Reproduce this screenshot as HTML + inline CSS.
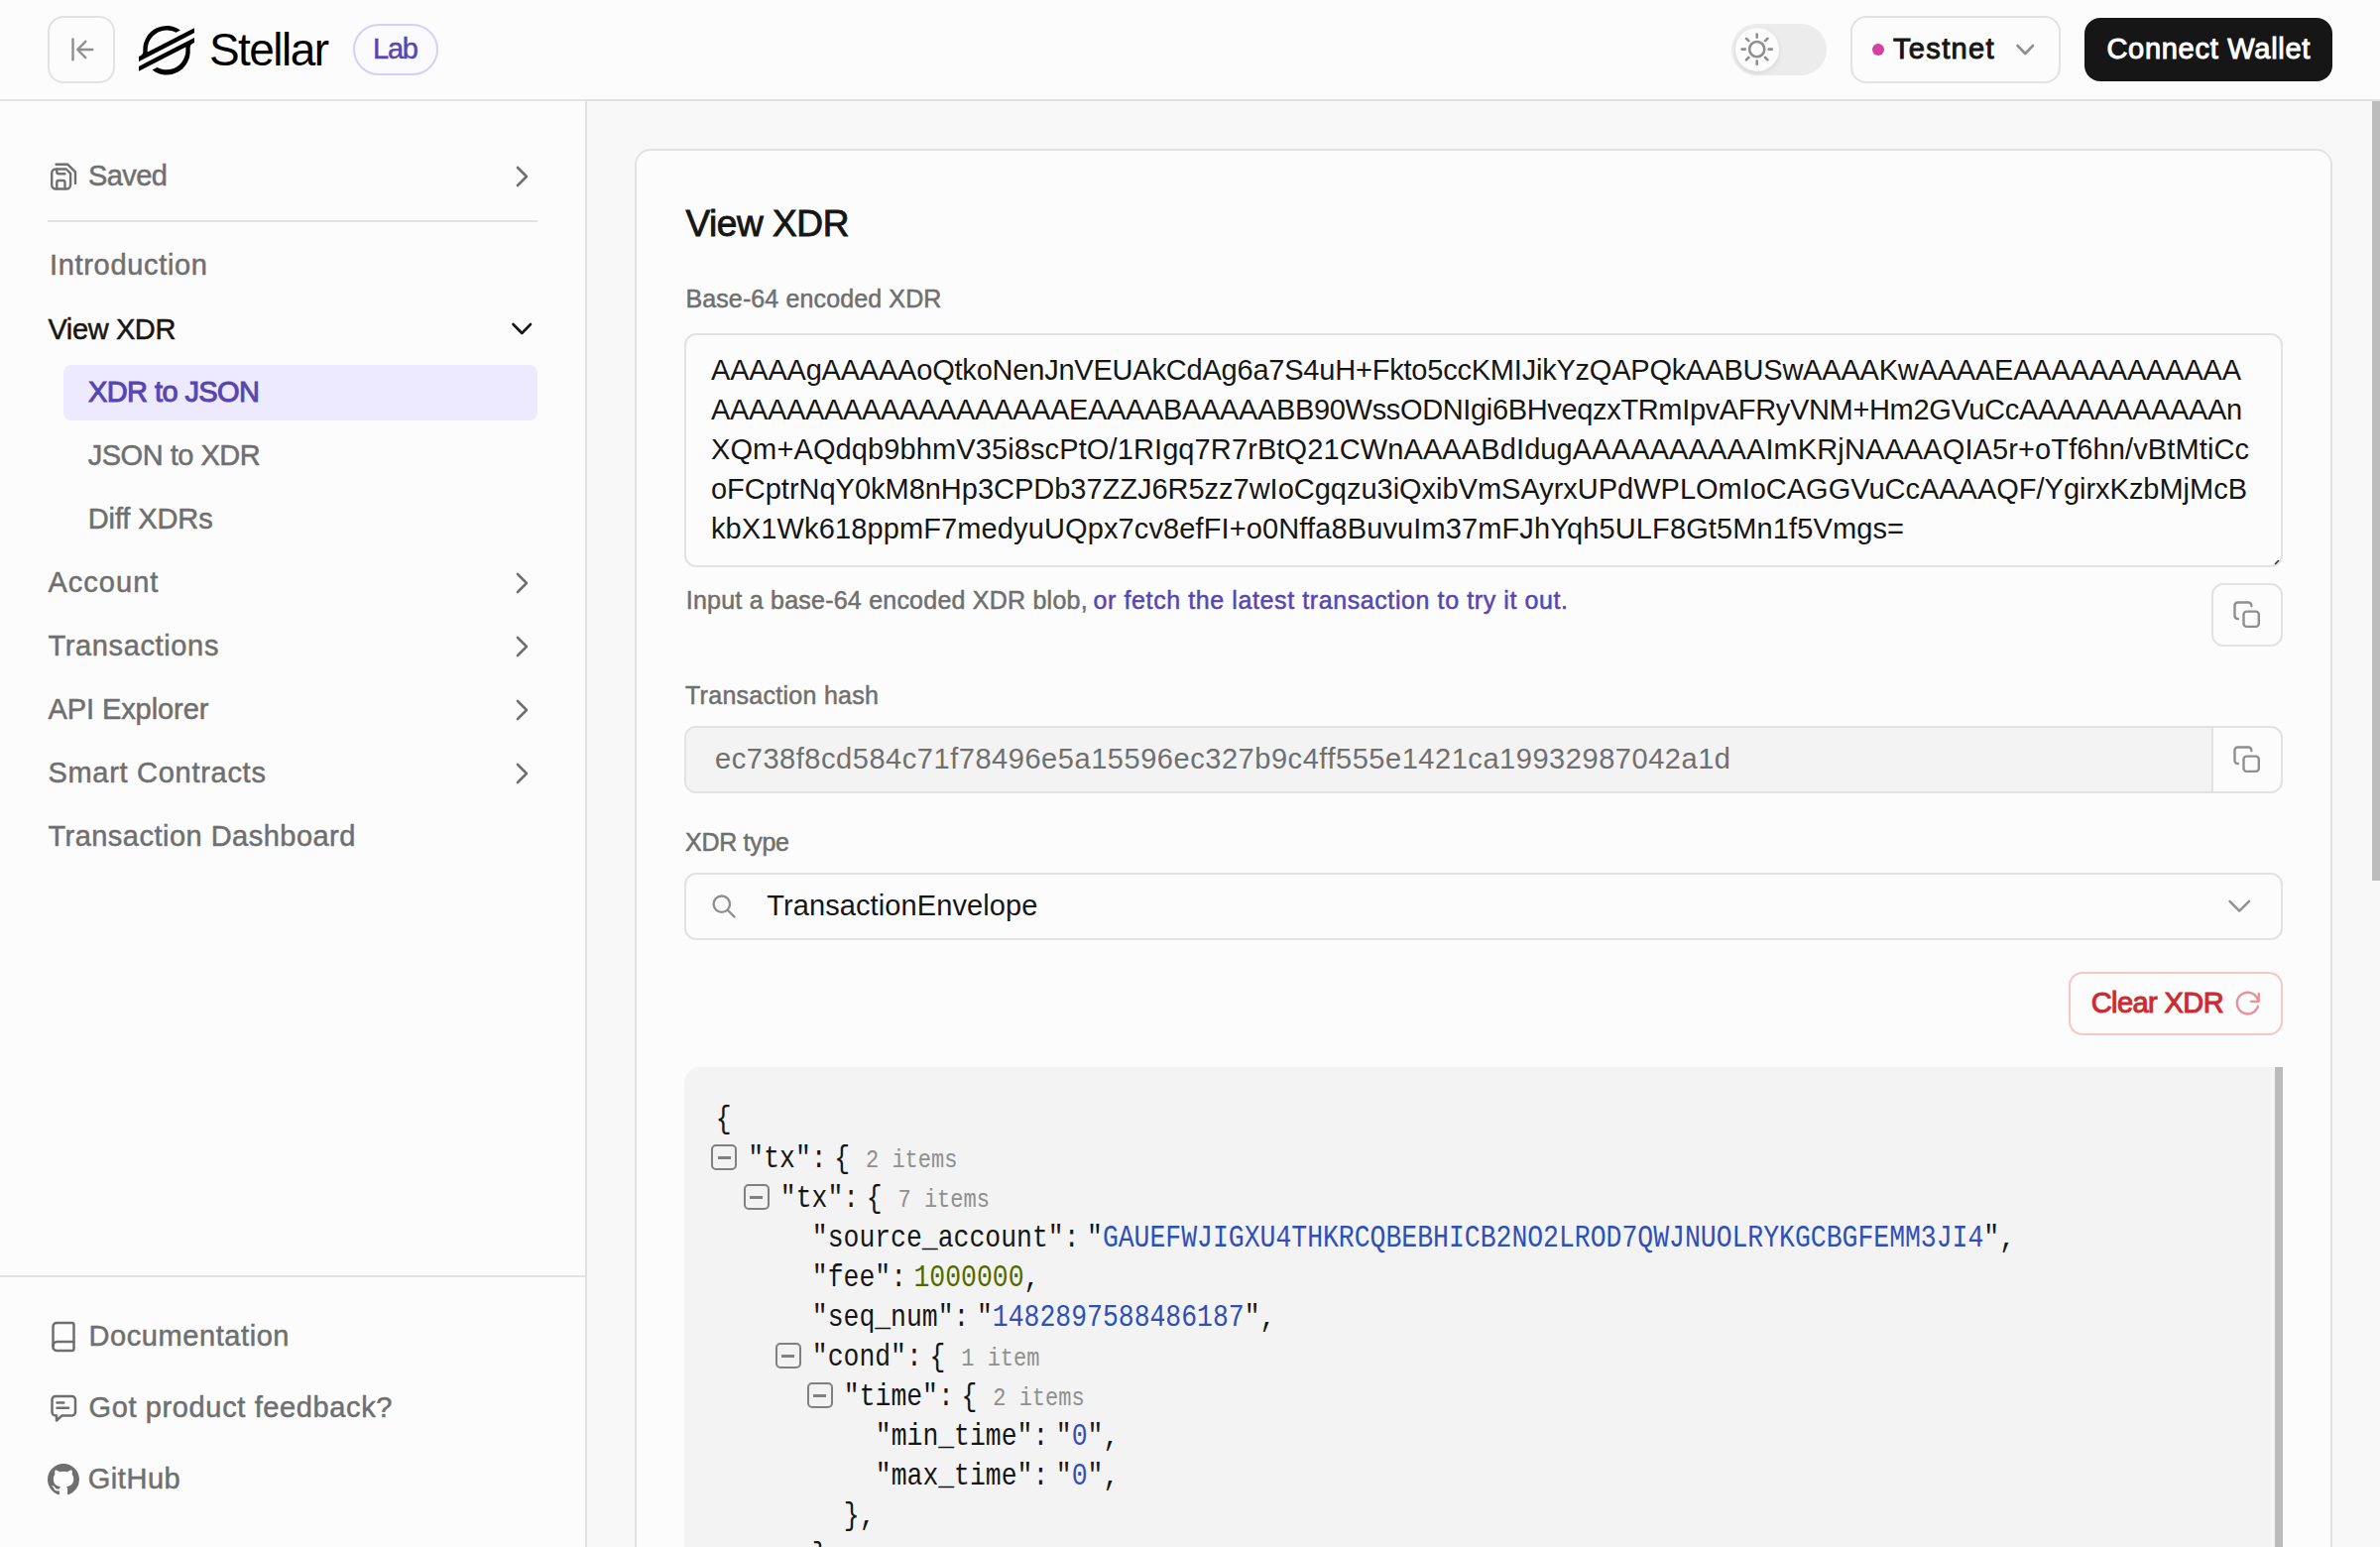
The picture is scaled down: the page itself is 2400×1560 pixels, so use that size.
<!DOCTYPE html>
<html><head><meta charset="utf-8">
<style>
html,body{margin:0;padding:0;width:2400px;height:1560px;overflow:hidden;background:#f8f8f8;font-family:"Liberation Sans",sans-serif;}
.a{position:absolute;}
.t{position:absolute;white-space:nowrap;line-height:1;}
.b{font-weight:bold;}
.m{font-family:"Liberation Mono",monospace;}
svg{position:absolute;overflow:visible;}
@media (max-width:1300px){html{zoom:0.5;}}
</style></head><body>

<!-- HEADER -->
<div class="a" style="left:0;top:0;width:2400px;height:100px;background:#fcfcfc;border-bottom:2px solid #e2e2e2;"></div>
<div class="a" style="left:48px;top:16px;width:64px;height:64px;border:2px solid #e2e2e2;border-radius:16px;"></div>
<svg style="left:0;top:0" width="2400" height="100">
  <g stroke="#8f8f8f" stroke-width="2.4" fill="none" stroke-linecap="round" stroke-linejoin="round">
    <path d="M73.5 39.5V60.2"/><path d="M93.3 50H79M86.3 41.8L78.2 50L86.3 58.2"/>
  </g>
</svg>
<svg style="left:140px;top:26px" width="56" height="48" viewBox="0 0 236.36 200" preserveAspectRatio="none"><path fill="#000" d="M203,26.16l-28.46,14.5-137.43,70a82.49,82.49,0,0,1-.7-10.69A82.88,82.88,0,0,1,158.2,28.6l16.29-8.3,2.43-1.24A100,100,0,0,0,18.18,100q0,3.82.29,7.61a18.19,18.19,0,0,1-9.88,17.58L0,129.57V150l25.29-12.89,0,0,8.19-4.18,8.07-4.11v0L186.43,55l16.28-8.29,33.65-17.15V9.14Z"/><path fill="#000" d="M236.36,50,49.78,145,33.5,153.31,0,170.38v20.41l33.27-16.95,28.46-14.5L199.3,89.24A83.45,83.45,0,0,1,200,100,82.87,82.87,0,0,1,78.09,174.91l-1,.53-19.84,10.11A100,100,0,0,0,218.18,100c0-2.57-.1-5.14-.29-7.68a18.21,18.21,0,0,1,9.87-17.58l8.6-4.38Z"/></svg>
<div class="a" style="left:356px;top:24px;width:82px;height:48px;border:2px solid #d7cff9;border-radius:26px;background:#fbfaff;"></div>

<div class="a" style="left:1746px;top:24px;width:96px;height:52px;border-radius:26px;background:#ececec;"></div>
<div class="a" style="left:1750px;top:28px;width:44px;height:44px;border-radius:50%;background:#fcfcfc;box-shadow:0 2px 5px rgba(0,0,0,0.10);"></div>
<svg style="left:0;top:0" width="2400" height="100">
  <g stroke="#8f8f8f" stroke-width="2.6" fill="none" stroke-linecap="round">
    <circle cx="1771.7" cy="49.6" r="7.6"/>
    <path d="M1771.7 34.5v3.2M1771.7 61.5v3.2M1756.6 49.6h3.2M1783.6 49.6h3.2M1761 38.9l2.3 2.3M1780.1 58l2.3 2.3M1761 60.3l2.3-2.3M1780.1 41.2l2.3-2.3"/>
  </g>
</svg>

<div class="a" style="left:1866px;top:16px;width:208px;height:64px;border:2px solid #e2e2e2;border-radius:16px;"></div>
<div class="a" style="left:1888px;top:44px;width:12px;height:12px;border-radius:50%;background:#d6409f;"></div>
<svg style="left:0;top:0" width="2400" height="100"><path d="M2034.5 46L2042.3 54L2050 46" stroke="#8f8f8f" stroke-width="2.6" fill="none" stroke-linecap="round" stroke-linejoin="round"/></svg>

<div class="a" style="left:2102px;top:18px;width:250px;height:64px;border-radius:16px;background:#161616;"></div>

<!-- SIDEBAR -->
<div class="a" style="left:0;top:102px;width:590px;height:1458px;background:#fcfcfc;border-right:2px solid #e2e2e2;"></div>
<div id="sidebar"><div class="a" style="left:64px;top:368px;width:478px;height:56px;border-radius:8px;background:#ede9fe;"></div><div class="a" style="left:48px;top:222px;width:494px;height:2px;background:#e2e2e2;"></div><div class="a" style="left:0;top:1286px;width:590px;height:2px;background:#e2e2e2;"></div><svg style="left:0;top:0" width="600" height="1560"><path d="M522 169 L531 178 L522 187" stroke="#6f6f6f" stroke-width="2.6" fill="none" stroke-linecap="round" stroke-linejoin="round"/><path d="M522 579 L531 588 L522 597" stroke="#6f6f6f" stroke-width="2.6" fill="none" stroke-linecap="round" stroke-linejoin="round"/><path d="M522 643 L531 652 L522 661" stroke="#6f6f6f" stroke-width="2.6" fill="none" stroke-linecap="round" stroke-linejoin="round"/><path d="M522 707 L531 716 L522 725" stroke="#6f6f6f" stroke-width="2.6" fill="none" stroke-linecap="round" stroke-linejoin="round"/><path d="M522 771 L531 780 L522 789" stroke="#6f6f6f" stroke-width="2.6" fill="none" stroke-linecap="round" stroke-linejoin="round"/><path d="M517.5 327 L526.3 336 L535 327" stroke="#161616" stroke-width="2.6" fill="none" stroke-linecap="round" stroke-linejoin="round"/><g stroke="#6f6f6f" stroke-width="2.4" fill="none" stroke-linecap="round" stroke-linejoin="round">
<path d="M56.2 170.5H66.7L71.1 174.9V186.5a4 4 0 0 1-4 4H56.2a4 4 0 0 1-4-4V174.5a4 4 0 0 1 4-4z"/>
<path d="M57.3 190.3V184a2 2 0 0 1 2-2h4.2a2 2 0 0 1 2 2v6.3"/>
<path d="M57.3 170.6v2.7a2 2 0 0 0 2 2h6.2"/>
<path d="M56.6 165.8H68.3L76 173.3V184.9"/>
</g><g stroke="#6f6f6f" stroke-width="2.5" fill="none" stroke-linecap="round" stroke-linejoin="round">
<path d="M53.5 1357.5V1337.5a3.5 3.5 0 0 1 3.5-3.5h15.5a2 2 0 0 1 2 2v24a2 2 0 0 1-2 2H57a3.5 3.5 0 0 1-3.5-3.5z"/>
<path d="M53.5 1357.5a4 4 0 0 1 4-4.5h17"/>
</g><g stroke="#6f6f6f" stroke-width="2.5" fill="none" stroke-linecap="round" stroke-linejoin="round">
<path d="M56 1408h16.5a3.5 3.5 0 0 1 3.5 3.5v12.5a3.5 3.5 0 0 1-3.5 3.5H62.5l-5.5 5v-5h-1a3.5 3.5 0 0 1-3.5-3.5v-12.5A3.5 3.5 0 0 1 56 1408z"/>
<path d="M57.5 1414.5h6.8M57.5 1419.8h11.5"/>
</g></svg><svg style="left:48px;top:1476px" width="32" height="32" viewBox="0 0 16 16"><path fill="#6f6f6f" d="M8 0C3.58 0 0 3.58 0 8c0 3.540 2.290 6.530 5.470 7.590.4.070.55-.17.55-.38 0-.19-.01-.82-.01-1.49-2.010.37-2.530-.49-2.690-.94-.09-.23-.48-.94-.82-1.130-.28-.15-.68-.52-.01-.53.63-.01 1.080.58 1.230.82.72 1.210 1.870.87 2.330.66.07-.52.28-.87.51-1.070-1.780-.2-3.640-.89-3.640-3.950 0-.87.31-1.590.82-2.150-.08-.2-.36-1.020.08-2.120 0 0 .67-.21 2.200.82.64-.18 1.320-.27 2-.27.68 0 1.360.09 2 .27 1.530-1.040 2.200-.82 2.200-.82.44 1.100.16 1.920.08 2.120.51.56.82 1.270.82 2.150 0 3.070-1.870 3.750-3.650 3.950.29.25.54.73.54 1.480 0 1.070-.01 1.930-.01 2.200 0 .21.15.46.55.38A8.013 8.013 0 0016 8c0-4.420-3.580-8-8-8z"/></svg></div><!--/sb-->

<!-- MAIN -->
<div class="a" style="left:2392px;top:102px;width:8px;height:786px;background:#bcbcbc;"></div>
<div class="a" style="left:640px;top:150px;width:1708px;height:1500px;background:#fcfcfc;border:2px solid #e2e2e2;border-radius:16px;"></div>
<div id="main"><div class="a" style="left:690px;top:336px;width:1608px;height:232px;border:2px solid #e2e2e2;border-radius:12px;background:#fcfcfc;"></div><svg style="left:0;top:0" width="2400" height="1560"><path d="M2294.5 568.5L2297.5 565.5" stroke="#333" stroke-width="1.6" stroke-linecap="round"/></svg><div class="a" style="left:2230px;top:588px;width:68px;height:60px;border:2px solid #e2e2e2;border-radius:12px;background:#fcfcfc;"></div><div class="a" style="left:690px;top:732px;width:1608px;height:64px;border:2px solid #e2e2e2;border-radius:12px;background:#fcfcfc;overflow:hidden;"><div class="a" style="left:0;top:0;width:1538px;height:64px;background:#f3f3f3;border-right:2px solid #e2e2e2;"></div></div><svg style="left:0;top:0" width="2400" height="1560"><g stroke="#8f8f8f" stroke-width="2.4" fill="none" stroke-linecap="round" stroke-linejoin="round"><path d="M2256.8 624h-0.3a3 3 0 0 1-3-3V610.5a3 3 0 0 1 3-3h10.8a3 3 0 0 1 3 3v0.6"/><rect x="2262.5" y="616.6" width="15.3" height="15.3" rx="3"/></g><g stroke="#8f8f8f" stroke-width="2.4" fill="none" stroke-linecap="round" stroke-linejoin="round"><path d="M2256.8 770h-0.3a3 3 0 0 1-3-3V756.5a3 3 0 0 1 3-3h10.8a3 3 0 0 1 3 3v0.6"/><rect x="2262.5" y="762.6" width="15.3" height="15.3" rx="3"/></g></svg><div class="a" style="left:690px;top:880px;width:1608px;height:64px;border:2px solid #e2e2e2;border-radius:12px;background:#fcfcfc;"></div><svg style="left:0;top:0" width="2400" height="1560"><g stroke="#8f8f8f" stroke-width="2.4" fill="none" stroke-linecap="round" stroke-linejoin="round"><circle cx="727.8" cy="911.7" r="8.2"/><path d="M734 918L740.5 924.5"/><path d="M2248.5 908.8L2258.2 918.6L2268 908.8"/></g></svg><div class="a" style="left:2086px;top:980px;width:212px;height:60px;border:2px solid #f9c6c6;border-radius:14px;background:#fcfcfc;"></div><svg style="left:0;top:0" width="2400" height="1560"><g stroke="#ec8e93" stroke-width="2.3" fill="none" stroke-linecap="round" stroke-linejoin="round"><path d="M2276.6 1007.6A10.8 10.8 0 1 0 2276.9 1014.8"/><path d="M2277.8 1001.8V1009.8H2269.9"/></g></svg><div class="a" style="left:690px;top:1076px;width:1604px;height:520px;background:#f3f3f3;border-radius:16px 4px 0 0;"></div><div class="a" style="left:2294px;top:1076px;width:8px;height:484px;background:#bbbbbb;"></div><div class="t m" style="left:721.8px;top:1116.7px;font-size:26.45px;color:#161616;transform:scaleY(1.18);transform-origin:0 20.26px;">{</div><div class="a" style="left:717.0px;top:1154.2px;width:22px;height:22px;border:2px solid #808080;border-radius:5px;"><div class="a" style="left:4.5px;top:10px;width:13px;height:2.5px;background:#808080;"></div></div><div class="t m" style="left:754.3px;top:1156.7px;font-size:26.45px;color:#161616;transform:scaleY(1.18);transform-origin:0 20.26px;">"tx"<span>:</span><span style="margin-left:7.5px"></span>{<span style="margin-left:16px;color:#8f8f8f;font-size:22px;">2 items</span></div><div class="a" style="left:749.5px;top:1194.2px;width:22px;height:22px;border:2px solid #808080;border-radius:5px;"><div class="a" style="left:4.5px;top:10px;width:13px;height:2.5px;background:#808080;"></div></div><div class="t m" style="left:786.8px;top:1196.7px;font-size:26.45px;color:#161616;transform:scaleY(1.18);transform-origin:0 20.26px;">"tx"<span>:</span><span style="margin-left:7.5px"></span>{<span style="margin-left:16px;color:#8f8f8f;font-size:22px;">7 items</span></div><div class="t m" style="left:818.8px;top:1236.7px;font-size:26.45px;color:#161616;transform:scaleY(1.18);transform-origin:0 20.26px;">"source_account"<span>:</span><span style="margin-left:7.5px"></span>"<span style="color:#2f4fb8">GAUEFWJIGXU4THKRCQBEBHICB2NO2LROD7QWJNUOLRYKGCBGFEMM3JI4</span>",</div><div class="t m" style="left:818.8px;top:1276.7px;font-size:26.45px;color:#161616;transform:scaleY(1.18);transform-origin:0 20.26px;">"fee"<span>:</span><span style="margin-left:7.5px"></span><span style="color:#4e6b00">1000000</span>,</div><div class="t m" style="left:818.8px;top:1316.7px;font-size:26.45px;color:#161616;transform:scaleY(1.18);transform-origin:0 20.26px;">"seq_num"<span>:</span><span style="margin-left:7.5px"></span>"<span style="color:#2f4fb8">1482897588486187</span>",</div><div class="a" style="left:781.5px;top:1354.2px;width:22px;height:22px;border:2px solid #808080;border-radius:5px;"><div class="a" style="left:4.5px;top:10px;width:13px;height:2.5px;background:#808080;"></div></div><div class="t m" style="left:818.8px;top:1356.7px;font-size:26.45px;color:#161616;transform:scaleY(1.18);transform-origin:0 20.26px;">"cond"<span>:</span><span style="margin-left:7.5px"></span>{<span style="margin-left:16px;color:#8f8f8f;font-size:22px;">1 item</span></div><div class="a" style="left:813.5px;top:1394.2px;width:22px;height:22px;border:2px solid #808080;border-radius:5px;"><div class="a" style="left:4.5px;top:10px;width:13px;height:2.5px;background:#808080;"></div></div><div class="t m" style="left:850.8px;top:1396.7px;font-size:26.45px;color:#161616;transform:scaleY(1.18);transform-origin:0 20.26px;">"time"<span>:</span><span style="margin-left:7.5px"></span>{<span style="margin-left:16px;color:#8f8f8f;font-size:22px;">2 items</span></div><div class="t m" style="left:882.8px;top:1436.7px;font-size:26.45px;color:#161616;transform:scaleY(1.18);transform-origin:0 20.26px;">"min_time"<span>:</span><span style="margin-left:7.5px"></span>"<span style="color:#2f4fb8">0</span>",</div><div class="t m" style="left:882.8px;top:1476.7px;font-size:26.45px;color:#161616;transform:scaleY(1.18);transform-origin:0 20.26px;">"max_time"<span>:</span><span style="margin-left:7.5px"></span>"<span style="color:#2f4fb8">0</span>",</div><div class="t m" style="left:850.8px;top:1516.7px;font-size:26.45px;color:#161616;transform:scaleY(1.18);transform-origin:0 20.26px;">},</div><div class="t m" style="left:818.8px;top:1556.7px;font-size:26.45px;color:#161616;transform:scaleY(1.18);transform-origin:0 20.26px;">},</div></div><!--/mn-->

<!--TEXT-->
<div class="t" id="stellar" style="left:211.0px;top:27.2px;font-size:46px;color:#000;letter-spacing:-1.565px;">Stellar</div>
<div class="t" id="lab" style="left:376.0px;top:35.4px;font-size:29px;color:#5746af;-webkit-text-stroke:0.5px #5746af;letter-spacing:-1.195px;">Lab</div>
<div class="t" id="testnet" style="left:1909.0px;top:35.4px;font-size:29px;color:#161616;-webkit-text-stroke:1px #161616;letter-spacing:1.350px;">Testnet</div>
<div class="t" id="connect" style="left:2124.4px;top:35.1px;font-size:29px;color:#fff;-webkit-text-stroke:1px #fff;letter-spacing:0.725px;">Connect Wallet</div>
<div class="t" id="s_saved" style="left:89.0px;top:162.9px;font-size:29px;color:#6f6f6f;-webkit-text-stroke:0.5px #6f6f6f;letter-spacing:-0.559px;">Saved</div>
<div class="t" id="s_intro" style="left:50.0px;top:253.3px;font-size:29px;color:#6f6f6f;-webkit-text-stroke:0.5px #6f6f6f;letter-spacing:0.678px;">Introduction</div>
<div class="t" id="s_view" style="left:48.4px;top:317.9px;font-size:29px;color:#161616;-webkit-text-stroke:0.5px #161616;letter-spacing:-0.375px;">View XDR</div>
<div class="t" id="s_x2j" style="left:89.0px;top:381.4px;font-size:29px;color:#5746af;-webkit-text-stroke:1px #5746af;letter-spacing:-0.588px;">XDR to JSON</div>
<div class="t" id="s_j2x" style="left:88.7px;top:445.4px;font-size:29px;color:#6f6f6f;-webkit-text-stroke:0.5px #6f6f6f;letter-spacing:-0.487px;">JSON to XDR</div>
<div class="t" id="s_diff" style="left:88.7px;top:509.4px;font-size:29px;color:#6f6f6f;-webkit-text-stroke:0.5px #6f6f6f;letter-spacing:-0.096px;">Diff XDRs</div>
<div class="t" id="s_acc" style="left:48.4px;top:573.4px;font-size:29px;color:#6f6f6f;-webkit-text-stroke:0.5px #6f6f6f;letter-spacing:1.034px;">Account</div>
<div class="t" id="s_tx" style="left:48.4px;top:637.4px;font-size:29px;color:#6f6f6f;-webkit-text-stroke:0.5px #6f6f6f;letter-spacing:0.642px;">Transactions</div>
<div class="t" id="s_api" style="left:48.4px;top:701.4px;font-size:29px;color:#6f6f6f;-webkit-text-stroke:0.5px #6f6f6f;letter-spacing:-0.072px;">API Explorer</div>
<div class="t" id="s_sc" style="left:48.4px;top:765.4px;font-size:29px;color:#6f6f6f;-webkit-text-stroke:0.5px #6f6f6f;letter-spacing:0.714px;">Smart Contracts</div>
<div class="t" id="s_dash" style="left:48.4px;top:829.4px;font-size:29px;color:#6f6f6f;-webkit-text-stroke:0.5px #6f6f6f;letter-spacing:0.481px;">Transaction Dashboard</div>
<div class="t" id="s_doc" style="left:89.5px;top:1333.3px;font-size:29px;color:#6f6f6f;-webkit-text-stroke:0.5px #6f6f6f;letter-spacing:0.578px;">Documentation</div>
<div class="t" id="s_fb" style="left:89.5px;top:1405.3px;font-size:29px;color:#6f6f6f;-webkit-text-stroke:0.5px #6f6f6f;letter-spacing:0.629px;">Got product feedback?</div>
<div class="t" id="s_gh" style="left:88.7px;top:1477.3px;font-size:29px;color:#6f6f6f;-webkit-text-stroke:0.5px #6f6f6f;letter-spacing:0.547px;">GitHub</div>
<div class="t" id="m_title" style="left:691.4px;top:206.6px;font-size:37px;color:#161616;-webkit-text-stroke:0.9px #161616;letter-spacing:-0.420px;">View XDR</div>
<div class="t" id="m_l1" style="left:691.4px;top:288.8px;font-size:25px;color:#6f6f6f;-webkit-text-stroke:0.5px #6f6f6f;letter-spacing:0.127px;">Base-64 encoded XDR</div>
<div class="t" id="x0" style="left:717.0px;top:359.4px;font-size:29px;color:#161616;letter-spacing:-0.210px;">AAAAAgAAAAAoQtkoNenJnVEUAkCdAg6a7S4uH+Fkto5ccKMIJikYzQAPQkAABUSwAAAAKwAAAAEAAAAAAAAAAAA</div>
<div class="t" id="x1" style="left:717.0px;top:399.4px;font-size:29px;color:#161616;letter-spacing:-0.342px;">AAAAAAAAAAAAAAAAAAAEAAAABAAAAABB90WssODNIgi6BHveqzxTRmIpvAFRyVNM+Hm2GVuCcAAAAAAAAAAAn</div>
<div class="t" id="x2" style="left:717.0px;top:439.4px;font-size:29px;color:#161616;letter-spacing:0.111px;">XQm+AQdqb9bhmV35i8scPtO/1RIgq7R7rBtQ21CWnAAAABdIdugAAAAAAAAAAImKRjNAAAAQIA5r+oTf6hn/vBtMtiCc</div>
<div class="t" id="x3" style="left:717.0px;top:479.4px;font-size:29px;color:#161616;letter-spacing:-0.015px;">oFCptrNqY0kM8nHp3CPDb37ZZJ6R5zz7wIoCgqzu3iQxibVmSAyrxUPdWPLOmIoCAGGVuCcAAAAQF/YgirxKzbMjMcB</div>
<div class="t" id="x4" style="left:717.0px;top:519.4px;font-size:29px;color:#161616;letter-spacing:0.121px;">kbX1Wk618ppmF7medyuUQpx7cv8efFI+o0Nffa8BuvuIm37mFJhYqh5ULF8Gt5Mn1f5Vmgs=</div>
<div class="t" id="m_help1" style="left:691.8px;top:592.8px;font-size:25px;color:#6f6f6f;-webkit-text-stroke:0.5px #6f6f6f;letter-spacing:0.228px;">Input a base-64 encoded XDR blob,</div>
<div class="t" id="m_help2" style="left:1102.6px;top:592.8px;font-size:25px;color:#5746af;-webkit-text-stroke:0.5px #5746af;letter-spacing:0.595px;">or fetch the latest transaction to try it out.</div>
<div class="t" id="m_l2" style="left:691.0px;top:688.8px;font-size:25px;color:#6f6f6f;-webkit-text-stroke:0.5px #6f6f6f;letter-spacing:0.276px;">Transaction hash</div>
<div class="t" id="m_hash" style="left:721.0px;top:751.4px;font-size:29px;color:#6f6f6f;letter-spacing:0.545px;">ec738f8cd584c71f78496e5a15596ec327b9c4ff555e1421ca19932987042a1d</div>
<div class="t" id="m_l3" style="left:691.0px;top:836.8px;font-size:25px;color:#6f6f6f;-webkit-text-stroke:0.5px #6f6f6f;letter-spacing:-0.283px;">XDR type</div>
<div class="t" id="m_type" style="left:773.3px;top:899.4px;font-size:29px;color:#161616;letter-spacing:0.090px;">TransactionEnvelope</div>
<div class="t" id="m_clear" style="left:2108.7px;top:997.4px;font-size:29px;color:#cd2b31;-webkit-text-stroke:1px #cd2b31;letter-spacing:-0.574px;">Clear XDR</div>
<!--/TEXT-->
</body></html>
